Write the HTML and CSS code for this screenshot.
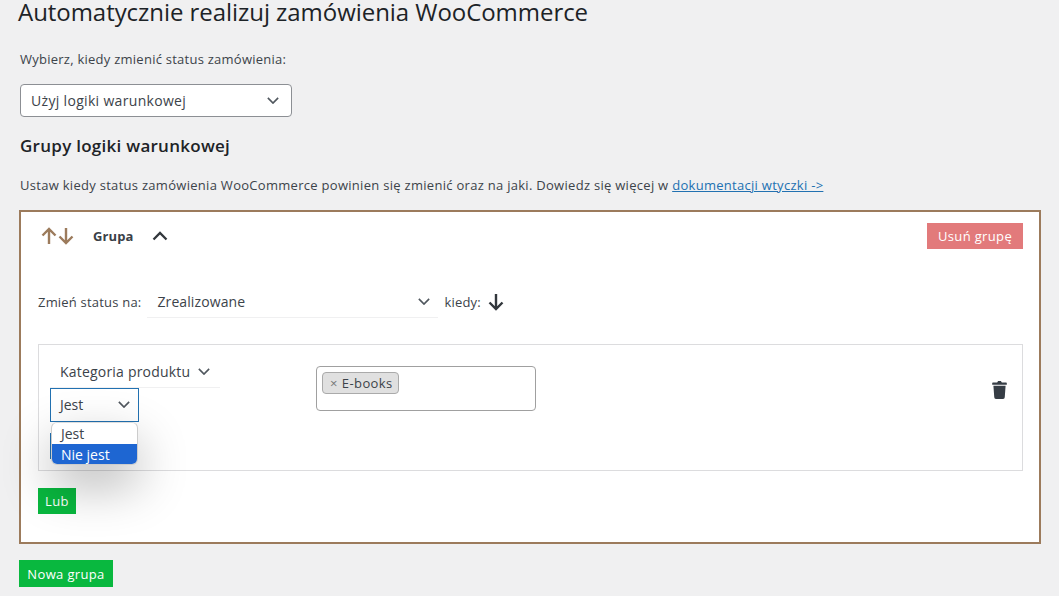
FILE: index.html
```html
<!DOCTYPE html>
<html lang="pl">
<head>
<meta charset="utf-8">
<title>Automatycznie realizuj zamówienia WooCommerce</title>
<link rel="stylesheet" href="styles.css">
</head>
<body>
<main class="page">
  <h1 class="title">Automatycznie realizuj zamówienia WooCommerce</h1>
  <p class="label">Wybierz, kiedy zmienić status zamówienia:</p>
  <div class="select main-select"><span>Użyj logiki warunkowej</span>
    <svg class="chev" viewBox="0 0 14 8"><path d="M1 1l6 6 6-6"/></svg></div>
  <h2 class="subtitle">Grupy logiki warunkowej</h2>
  <p class="desc">Ustaw kiedy status zamówienia WooCommerce powinien się zmienić oraz na jaki. Dowiedz się więcej w <a href="#">dokumentacji wtyczki -&gt;</a></p>

  <section class="group">
    <header class="group-head">
      <div class="arrows">
        <svg class="arrow" viewBox="0 0 16 18"><path d="M8 17V2M1.500 8.500L8 2l6.500 6.500"/></svg>
        <svg class="arrow" viewBox="0 0 16 18"><path d="M8 1v15M1.500 9.500L8 16l6.500-6.500"/></svg>
      </div>
      <strong class="group-name">Grupa</strong>
      <svg class="chev-up" viewBox="0 0 16 10"><path d="M1.500 8.500L8 2l6.500 6.500"/></svg>
      <button class="btn btn-danger">Usuń grupę</button>
    </header>

    <div class="status-row">
      <span class="small">Zmień status na:</span>
      <div class="line-select status-select"><span>Zrealizowane</span>
        <svg class="chev" viewBox="0 0 14 8"><path d="M1 1l6 6 6-6"/></svg></div>
      <span class="small">kiedy:</span>
      <svg class="arrow-dark" viewBox="0 0 16 18"><path d="M8 1v15M1.500 9.500L8 16l6.500-6.500"/></svg>
    </div>

    <div class="rule">
      <div class="rule-left">
        <div class="line-select cat-select"><span>Kategoria produktu</span>
          <svg class="chev" viewBox="0 0 14 8"><path d="M1 1l6 6 6-6"/></svg></div>
        <div class="focus-select"><span>Jest</span>
          <svg class="chev" viewBox="0 0 14 8"><path d="M1 1l6 6 6-6"/></svg></div>
        <div class="hidden-btn"></div>
        <ul class="dropdown">
          <li>Jest</li>
          <li class="active">Nie jest</li>
        </ul>
      </div>
      <div class="tags"><span class="tag"><i>×</i>E-books</span></div>
      <svg class="trash" viewBox="0 0 16 20"><path d="M5.500 2.500L6.500 1h3l1 1.500H15a.8.8 0 0 1 .8.8V5H.2V3.300A.8.8 0 0 1 1 2.500zM1.500 6h13l-.9 12.300A1.800 1.800 0 0 1 11.800 20H4.200a1.800 1.800 0 0 1-1.800-1.700z"/></svg>
    </div>
    <button class="btn btn-green btn-or">Lub</button>
  </section>
  <button class="btn btn-green btn-new">Nowa grupa</button>
</main>
</body>
</html>
```
FILE: styles.css
```css
* { box-sizing: border-box; }
html, body { margin: 0; height: 596px; overflow: hidden; }
body {
  background: #f0f0f1;
  color: #3c434a;
  font-family: "Open Sans", "Noto Sans", sans-serif;
  font-size: 13px;
}
.page { padding-left: 19px; width: 1059px; }
.title {
  margin: 0 0 0 -1px;
  font-size: 24px;
  font-weight: 400;
  line-height: 24px;
  letter-spacing: -.05px;
  color: #1d2327;
}
.label { margin: 25px 0 0 1px; line-height: 20px; letter-spacing: .25px; }
.select {
  display: flex; align-items: center; justify-content: space-between;
  width: 272px; height: 33px; margin: 15px 0 0 1px; padding: 0 12px 0 10px;
  background: #fff; border: 1px solid #8c8f94; border-radius: 4px;
  font-size: 14px; letter-spacing: .32px;
}
.chev { width: 12px; height: 7px; fill: none; stroke: #50575e; stroke-width: 1.900; flex: none; }
.subtitle { margin: 17px 0 0 1px; font-size: 17px; font-weight: 600; line-height: 24px; letter-spacing: .27px; color: #1d2327; }
.desc { margin: 17px 0 0 1px; line-height: 20px; white-space: nowrap; letter-spacing: .29px; }
.desc a { color: #2271b1; }
.group {
  width: 1022px; height: 334px; margin-top: 15px; padding: 11px 16px 0 17px;
  background: #fff; border: 2px solid #9c7b5c;
}
.group-head { display: flex; align-items: center; height: 26px; }
.arrows { display: flex; gap: 1px; margin-left: 3px; }
.arrow { width: 16px; height: 18px; fill: none; stroke: #9c7b5c; stroke-width: 2.400; }
.group-name { margin-left: 19px; font-size: 13px; font-weight: 700; letter-spacing: .1px; color: #3a4047; }
.chev-up { width: 16px; height: 10px; margin-left: 19px; fill: none; stroke: #32373c; stroke-width: 2.300; }
.btn {
  display: block; border: 0; border-radius: 0; color: #fff; font: inherit; font-size: 13px;
  padding: 0; text-align: center; letter-spacing: .35px;
}
.btn-danger { width: 96px; height: 26px; margin-left: auto; background: #e27a7b; }
.btn-green { background: #09b83f; }
.status-row { display: flex; align-items: center; height: 36px; margin-top: 35px; }
.small { font-size: 13px; letter-spacing: .2px; color: #3c434a; }
.line-select {
  display: flex; align-items: center; justify-content: space-between;
  background: #fff; border-bottom: 1px solid #f0f0f1; font-size: 14px; letter-spacing: .1px;
}
.status-select { align-self: flex-start; width: 291px; height: 34px; margin: 0 6px; padding: 2px 8px 0 10px; }
.arrow-dark { width: 16px; height: 18px; margin-left: 7px; fill: none; stroke: #32373c; stroke-width: 2.400; }
.rule {
  display: flex; align-items: flex-start; height: 127px; margin-top: 24px;
  border: 1px solid #dcdcde; position: relative;
}
.rule-left { width: 277px; padding: 10px 0 0 11px; flex: none; position: relative; }
.cat-select { width: 170px; height: 33px; padding: 0 8px 0 10px; justify-content: flex-start; gap: 8px; letter-spacing: .2px; }
.focus-select {
  display: flex; align-items: center; justify-content: space-between;
  width: 89px; height: 34px; padding: 0 8px 2px 9px;
  background: #fff; border: 1px solid #2271b1; font-size: 14px;
}
.hidden-btn { width: 26px; height: 26px; margin-top: 11px; background: #2271b1; }
.dropdown {
  position: absolute; left: 12px; top: 77px; width: 87px; height: 43px;
  margin: 0; padding: 0; list-style: none; overflow: hidden;
  background: #fff; border: 1px solid #ccc; border-top-color: #ddd; border-radius: 6px;
  box-shadow: 0 20px 50px rgba(0, 0, 0, .3);
  font-size: 14px; line-height: 21px;
}
.dropdown li { padding-left: 9px; height: 21px; }
.dropdown .active { background: #1e66d2; color: #fff; }
.tags {
  width: 220px; height: 45px; margin-top: 21px; padding: 5px;
  background: #fff; border: 1px solid #a0a0a0; border-radius: 4px;
}
.tag {
  display: inline-flex; align-items: center; height: 22px; padding: 0 5px 0 7px;
  background: #e0e0e0; border: 1px solid #aaa; border-radius: 4px; font-size: 13px; letter-spacing: .4px;
}
.tag i { font-style: normal; color: #777; margin-right: 4px; }
.trash { width: 15px; height: 19px; margin: 35px 15px 0 auto; fill: #363d45; }
.btn-or { width: 38px; height: 26px; margin-top: 17px; }
.btn-new { width: 94px; height: 27px; margin-top: 16px; }
```
